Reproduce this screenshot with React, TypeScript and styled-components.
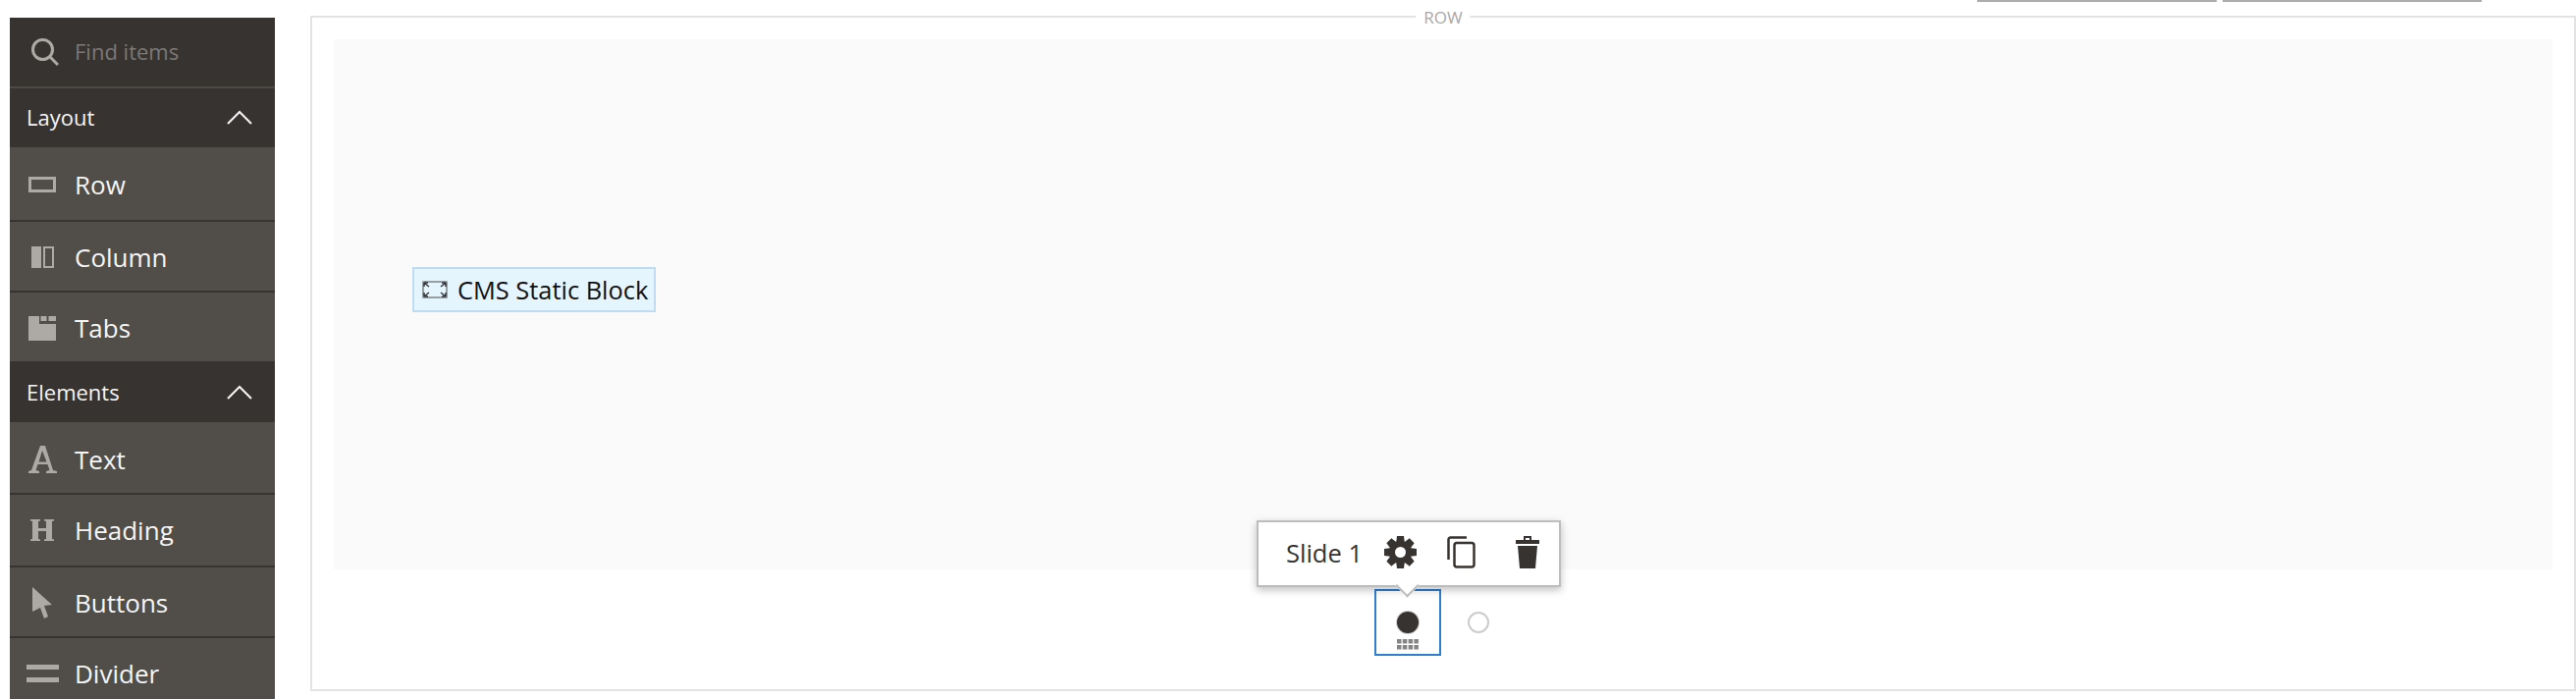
import styled, { createGlobalStyle } from 'styled-components'

const GlobalStyle = createGlobalStyle`
    html, body {
        margin: 0;
        padding: 0;
        height: 712px;
        overflow: hidden;
        background: #ffffff;
        font-family: "Open Sans", "Noto Sans", sans-serif;
    }
`

const Page = styled.div`
    width: 2624px;
    height: 712px;
    overflow: hidden;
    display: flex;
    flex-direction: column;
`

const TopStrip = styled.div`
    height: 2px;
    flex-shrink: 0;
    display: flex;
    justify-content: flex-end;
    gap: 6px;
    padding-right: 96px;
`

const StripTab = styled.div<{ $width: number }>`
    width: ${(p) => p.$width}px;
    background: #adadad;
`

const Body = styled.div`
    flex: 1;
    display: flex;
    align-items: flex-start;
    padding: 14px 0 0 10px;
`

const Sidebar = styled.aside`
    width: 270px;
    margin-top: 2px;
    margin-right: 36px;
    flex-shrink: 0;
    height: 694px;
    overflow: hidden;
    background: #514e4a;
`

const SearchBar = styled.div`
    height: 70px;
    display: flex;
    align-items: center;
    padding-left: 22px;
    gap: 16px;
    background: #373330;
    border-bottom: 2px solid #4d4945;
`

const SearchHint = styled.span`
    margin-bottom: 3px;
    font-size: 22px;
    color: #7b7875;
`

const GroupHeader = styled.div<{ $height: number; $bottom: number }>`
    height: ${(p) => p.$height}px;
    display: flex;
    align-items: center;
    justify-content: space-between;
    padding: 0 23px ${(p) => p.$bottom}px 17px;
    box-sizing: border-box;
    background: #373330;
    color: #f5f5f5;
    font-size: 22px;
    svg {
        margin-top: 2px;
    }
`

const Item = styled.div<{ $height: number; $shift: number; $last?: boolean }>`
    height: ${(p) => p.$height}px;
    box-sizing: border-box;
    display: flex;
    align-items: center;
    padding-top: ${(p) => p.$shift}px;
    border-bottom: ${(p) => (p.$last ? 'none' : '2px solid #373330')};
    color: #f5f5f5;
    font-size: 26px;
`

const ItemIcon = styled.div`
    width: 66px;
    flex-shrink: 0;
    display: flex;
    justify-content: center;
    svg {
        display: block;
        fill: #adaaa6;
    }
`

const RowFrame = styled.section`
    position: relative;
    flex: 1;
    box-sizing: border-box;
    height: 688px;
    border: 2px solid #e3e3e3;
    padding: 22px 22px 0 22px;
`

const RowLegend = styled.span`
    position: absolute;
    top: -11px;
    left: 50%;
    transform: translateX(-50%);
    padding: 0 8px;
    background: #ffffff;
    color: #a8a8a8;
    font-size: 17px;
    line-height: 22px;
`

const SlideArea = styled.div`
    height: 540px;
    background: #fafafa;
    display: flex;
    align-items: center;
    padding: 0 0 30px 80px;
    box-sizing: border-box;
`

const BlockChip = styled.div`
    display: flex;
    align-items: center;
    gap: 10px;
    box-sizing: border-box;
    width: 248px;
    height: 46px;
    padding-left: 8px;
    background: #e5f5fe;
    border: 2px solid #bfdcf3;
    color: #111111;
    font-size: 25.4px;
`

const Dots = styled.div`
    display: flex;
    align-items: center;
    justify-content: center;
    margin-top: 20px;
    gap: 27px;
    padding-right: 23px;
`

const ActiveDot = styled.div`
    position: relative;
    box-sizing: border-box;
    width: 68px;
    height: 68px;
    border: 2px solid #2f7fd0;
    display: flex;
    flex-direction: column;
    align-items: center;
    padding-top: 21px;
    gap: 6px;
`

const FilledDot = styled.div`
    box-sizing: border-box;
    width: 22px;
    height: 22px;
    border-radius: 50%;
    background: #373330;
    box-shadow: 0 0 0 1px #cccccc;
`

const EmptyDot = styled.div`
    box-sizing: border-box;
    width: 22px;
    height: 22px;
    border-radius: 50%;
    background: #ffffff;
    border: 2px solid #cccccc;
`

const Toolbar = styled.div`
    position: absolute;
    left: -122px;
    top: -72px;
    box-sizing: border-box;
    width: 310px;
    height: 68px;
    display: flex;
    align-items: center;
    padding: 0 0 3px 28px;
    background: #ffffff;
    border: 2px solid #bdbdbd;
    box-shadow: 0 3px 8px rgba(0, 0, 0, 0.25);
    color: #373330;
    font-size: 25.5px;
    &::after {
        content: '';
        position: absolute;
        left: 143px;
        bottom: -9px;
        width: 17px;
        height: 17px;
        box-sizing: border-box;
        background: #ffffff;
        border-right: 2px solid #bdbdbd;
        border-bottom: 2px solid #bdbdbd;
        transform: rotate(45deg);
    }
`

const ToolButtons = styled.div`
    display: flex;
    align-items: center;
    margin-left: 22px;
    gap: 31px;
    svg {
        display: block;
    }
    svg:last-child {
        margin-left: 10px;
    }
`

const gearTeeth = [0, 45, 90, 135, 180, 225, 270, 315]

function SearchIcon() {
    return (
        <svg width="28" height="28" viewBox="0 0 28 28" fill="none" stroke="#adaaa6" strokeWidth="3">
            <circle cx="11.500" cy="11.500" r="10" />
            <path d="M18.500 18.500l8.500 8.500" />
        </svg>
    )
}

function ChevronUp() {
    return (
        <svg width="26" height="16" viewBox="0 0 26 16" fill="none" stroke="#f5f5f5" strokeWidth="2">
            <path d="M1 14L13 2l12 12" />
        </svg>
    )
}

function RowIcon() {
    return (
        <svg width="28" height="16" viewBox="0 0 28 16">
            <path fillRule="evenodd" d="M0 0h28v16H0zM3 3v10h22V3z" />
        </svg>
    )
}

function ColumnIcon() {
    return (
        <svg width="23" height="22" viewBox="0 0 23 22">
            <path d="M0 0h10v22H0z" />
            <path fillRule="evenodd" d="M12 0h11v22H12zM14 2v18h7V2z" />
        </svg>
    )
}

function TabsIcon() {
    return (
        <svg width="28" height="25" viewBox="0 0 28 25">
            <path d="M0 0h11v8h17v17H0zM12.500 0h6v5h-6zM20.500 0h7.500v5h-7.500z" />
        </svg>
    )
}

function TextIcon() {
    return (
        <svg width="29" height="28" viewBox="0 0 29 28">
            <path fillRule="evenodd" d="M12 0h5l8 25 4 1v2H18v-2l3.500-1-2-6h-10l-2 6 3.500 1v2H0v-2l3-1zM10.500 16.500h8L14 5z" />
        </svg>
    )
}

function HeadingIcon() {
    return (
        <svg width="24" height="22" viewBox="0 0 24 22">
            <path d="M0 0h10v1.500L8 2v7h8V2l-2-.5V0h10v1.500L22 2v18l2 .5V22H14v-1.500l2-.5v-8H8v8l2 .5V22H0v-1.500L2 20V2L0 1.500z" />
        </svg>
    )
}

function ArrowIcon() {
    return (
        <svg width="20" height="32" viewBox="0 0 20 32">
            <path d="M0 0l20 18-8 1 4 11-4 2-4-11-8 4z" />
        </svg>
    )
}

function DividerIcon() {
    return (
        <svg width="33" height="18" viewBox="0 0 33 18">
            <path d="M0 0h33v5H0zM0 13h33v5H0z" />
        </svg>
    )
}

function BlockIcon() {
    return (
        <svg width="26" height="18" viewBox="0 0 26 18" fill="none">
            <rect x="1" y="1" width="24" height="16" stroke="#7d8285" strokeWidth="1.500" />
            <path
                d="M2 2l5 4M2 2h4M2 2v4M24 2l-5 4M24 2h-4M24 2v4M2 16l5-4M2 16h4M2 16v-4M24 16l-5-4M24 16h-4M24 16v-4"
                stroke="#33363a"
                strokeWidth="1.500"
            />
        </svg>
    )
}

function GearIcon() {
    return (
        <svg width="33" height="33" viewBox="0 0 33 33" fill="#373330">
            {gearTeeth.map((angle) => (
                <path key={angle} d="M13 0h7l1 8h-9z" transform={`rotate(${angle} 16.500 16.500)`} />
            ))}
            <circle cx="16.500" cy="16.500" r="11.500" />
            <circle cx="16.500" cy="16.500" r="5.500" fill="#ffffff" />
        </svg>
    )
}

function CopyIcon() {
    return (
        <svg width="29" height="33" viewBox="0 0 29 33" fill="none" stroke="#373330" strokeWidth="2.500">
            <path d="M20 1.500H3.500a2 2 0 0 0-2 2V24" />
            <rect x="7.500" y="7" width="20" height="24.500" rx="2.500" />
        </svg>
    )
}

function TrashIcon() {
    return (
        <svg width="24" height="33" viewBox="0 0 24 33" fill="#373330">
            <path fillRule="evenodd" d="M8 0h8v4h8v4H0V4h8zM10 2v2h4V2zM2 10h20l-2 23H4z" />
        </svg>
    )
}

function GripIcon() {
    return (
        <svg width="22" height="11" viewBox="0 0 22 11" fill="#858585">
            <path d="M0 0h4.500v4.500H0zM5.800 0h4.500v4.500H5.800zM11.600 0h4.500v4.500h-4.500zM17.400 0h4.500v4.500h-4.500zM0 6h4.500v4.500H0zM5.800 6h4.500v4.500H5.800zM11.600 6h4.500v4.500h-4.500zM17.400 6h4.500v4.500h-4.500z" />
        </svg>
    )
}

const layoutItems = [
    { label: 'Row', icon: <RowIcon />, height: 76, shift: 2 },
    { label: 'Column', icon: <ColumnIcon />, height: 72, shift: 2 },
    { label: 'Tabs', icon: <TabsIcon />, height: 70, shift: 2, last: true },
]

const elementItems = [
    { label: 'Text', icon: <TextIcon />, height: 74, shift: 3 },
    { label: 'Heading', icon: <HeadingIcon />, height: 74, shift: 0 },
    { label: 'Buttons', icon: <ArrowIcon />, height: 72, shift: 2 },
    { label: 'Divider', icon: <DividerIcon />, height: 72, shift: 0, last: true },
]

function renderItems(items: typeof layoutItems) {
    return items.map((item) => (
        <Item key={item.label} $height={item.height} $shift={item.shift} $last={item.last}>
            <ItemIcon>{item.icon}</ItemIcon>
            <span>{item.label}</span>
        </Item>
    ))
}

export default function App() {
    return (
        <Page>
            <GlobalStyle />
            <TopStrip>
                <StripTab $width={244} />
                <StripTab $width={264} />
            </TopStrip>
            <Body>
                <Sidebar>
                    <SearchBar>
                        <SearchIcon />
                        <SearchHint>Find items</SearchHint>
                    </SearchBar>
                    <GroupHeader $height={60} $bottom={3}>
                        Layout
                        <ChevronUp />
                    </GroupHeader>
                    {renderItems(layoutItems)}
                    <GroupHeader $height={62} $bottom={1}>
                        Elements
                        <ChevronUp />
                    </GroupHeader>
                    {renderItems(elementItems)}
                </Sidebar>
                <RowFrame>
                    <RowLegend>ROW</RowLegend>
                    <SlideArea>
                        <BlockChip>
                            <BlockIcon />
                            CMS Static Block
                        </BlockChip>
                    </SlideArea>
                    <Dots>
                        <ActiveDot>
                            <Toolbar>
                                Slide 1
                                <ToolButtons>
                                    <GearIcon />
                                    <CopyIcon />
                                    <TrashIcon />
                                </ToolButtons>
                            </Toolbar>
                            <FilledDot />
                            <GripIcon />
                        </ActiveDot>
                        <EmptyDot />
                    </Dots>
                </RowFrame>
            </Body>
        </Page>
    )
}
